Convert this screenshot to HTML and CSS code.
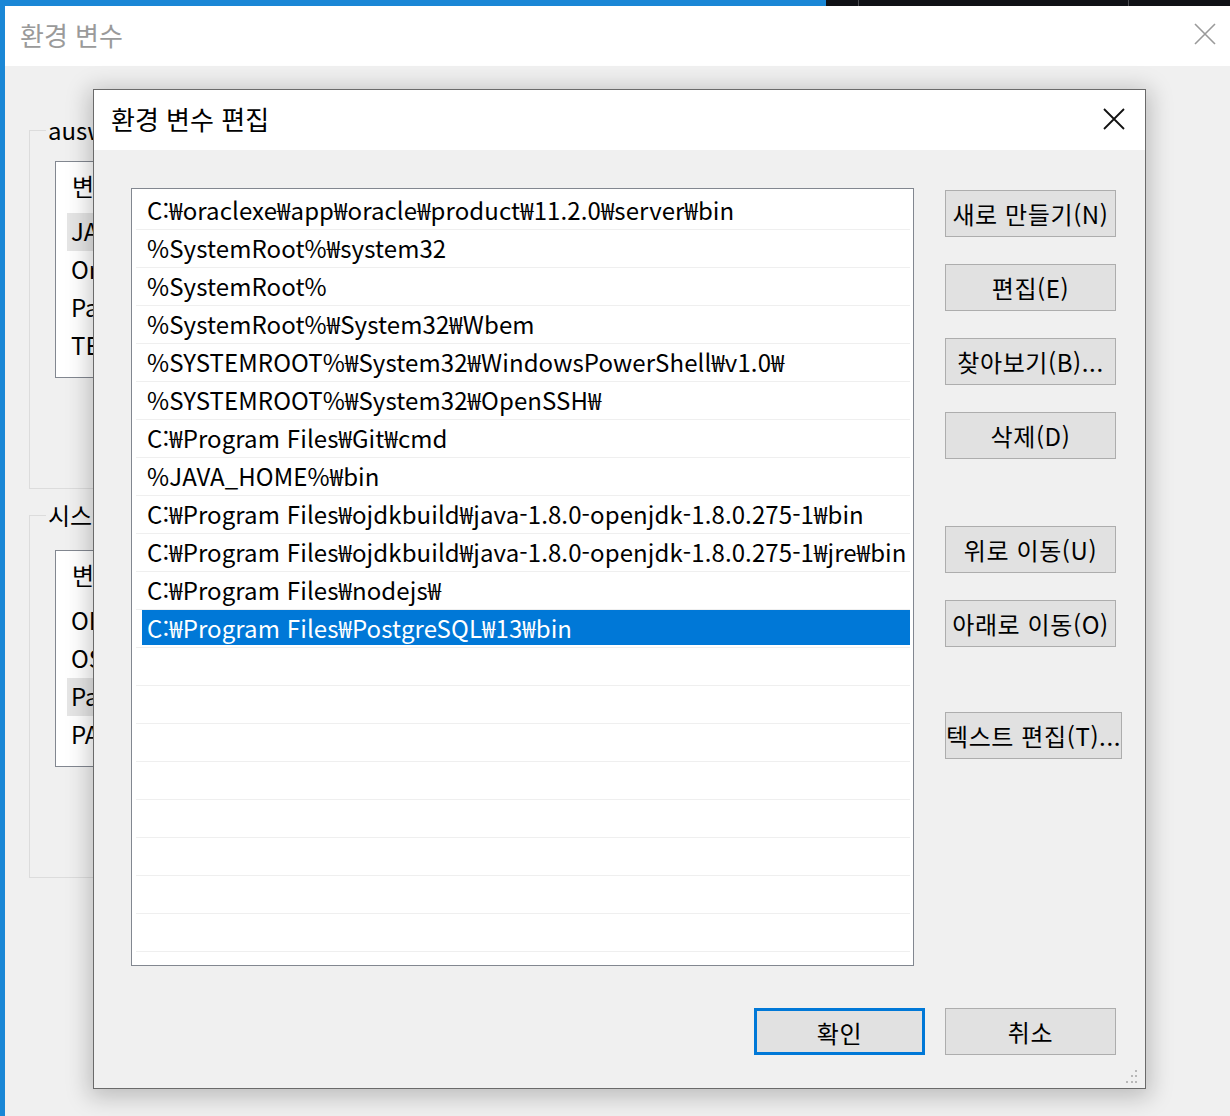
FILE: index.html
```html
<!DOCTYPE html>
<html lang="ko">
<head>
<meta charset="utf-8">
<title>환경 변수 편집</title>
<link rel="stylesheet" href="styles.css">
</head>
<body>
<div class="screen">
  <div class="topstrip">
    <div class="strip-blue"></div>
    <div class="strip-dark"><span class="seg seg1"></span><span class="seg seg2"></span></div>
  </div>
  <div class="outer">
    <div class="outer-title">
      <span class="outer-title-text">환경 변수</span>
      <svg class="outer-close" width="22" height="22" viewBox="0 0 22 22"><path d="M1 1L21 21M21 1L1 21" stroke="#9a9a9a" stroke-width="1.6" fill="none"/></svg>
    </div>
    <div class="outer-body">
      <fieldset class="group">
        <legend>ausw</legend>
        <div class="vlist">
          <div class="vhead">변수</div>
          <div class="vrow sel">JAVA_HOME</div>
          <div class="vrow">OneDrive</div>
          <div class="vrow">Path</div>
          <div class="vrow">TEMP</div>
        </div>
      </fieldset>
      <fieldset class="group group2">
        <legend>시스템 변수(S)</legend>
        <div class="vlist">
          <div class="vhead">변수</div>
          <div class="vrow">OPENSSL_CONF</div>
          <div class="vrow">OS</div>
          <div class="vrow sel">Path</div>
          <div class="vrow">PATHEXT</div>
        </div>
      </fieldset>
    </div>
  </div>

  <div class="dialog">
    <div class="dlg-title">
      <span class="dlg-title-text">환경 변수 편집</span>
      <svg class="dlg-close" width="22" height="22" viewBox="0 0 22 22"><path d="M1 1L21 21M21 1L1 21" stroke="#111" stroke-width="1.8" fill="none"/></svg>
    </div>
    <div class="dlg-body">
      <div class="dlg-main">
        <div class="plist">
          <div class="prow"><span class="pcell">C:₩oraclexe₩app₩oracle₩product₩11.2.0₩server₩bin</span></div>
          <div class="prow"><span class="pcell">%SystemRoot%₩system32</span></div>
          <div class="prow"><span class="pcell">%SystemRoot%</span></div>
          <div class="prow"><span class="pcell">%SystemRoot%₩System32₩Wbem</span></div>
          <div class="prow"><span class="pcell">%SYSTEMROOT%₩System32₩WindowsPowerShell₩v1.0₩</span></div>
          <div class="prow"><span class="pcell">%SYSTEMROOT%₩System32₩OpenSSH₩</span></div>
          <div class="prow"><span class="pcell">C:₩Program Files₩Git₩cmd</span></div>
          <div class="prow"><span class="pcell">%JAVA_HOME%₩bin</span></div>
          <div class="prow"><span class="pcell">C:₩Program Files₩ojdkbuild₩java-1.8.0-openjdk-1.8.0.275-1₩bin</span></div>
          <div class="prow"><span class="pcell">C:₩Program Files₩ojdkbuild₩java-1.8.0-openjdk-1.8.0.275-1₩jre₩bin</span></div>
          <div class="prow"><span class="pcell">C:₩Program Files₩nodejs₩</span></div>
          <div class="prow"><span class="pcell selected">C:₩Program Files₩PostgreSQL₩13₩bin</span></div>
          <div class="prow"><span class="pcell"></span></div>
          <div class="prow"><span class="pcell"></span></div>
          <div class="prow"><span class="pcell"></span></div>
          <div class="prow"><span class="pcell"></span></div>
          <div class="prow"><span class="pcell"></span></div>
          <div class="prow"><span class="pcell"></span></div>
          <div class="prow"><span class="pcell"></span></div>
          <div class="prow"><span class="pcell"></span></div>
        </div>
        <div class="side">
          <button class="btn">새로 만들기(N)</button>
          <button class="btn">편집(E)</button>
          <button class="btn">찾아보기(B)...</button>
          <button class="btn">삭제(D)</button>
          <button class="btn gap-big">위로 이동(U)</button>
          <button class="btn">아래로 이동(O)</button>
          <button class="btn wide gap-big2">텍스트 편집(T)...</button>
        </div>
      </div>
      <div class="dlg-foot">
        <button class="btn default">확인</button>
        <button class="btn">취소</button>
      </div>
    </div>
    <svg class="grip" width="16" height="16" viewBox="0 0 16 16">
      <rect x="12" y="1" width="2" height="2" fill="#b8b8b8"/>
      <rect x="8" y="6" width="2" height="2" fill="#b8b8b8"/>
      <rect x="12" y="6" width="2" height="2" fill="#b8b8b8"/>
      <rect x="3" y="12" width="2" height="2" fill="#b8b8b8"/>
      <rect x="8" y="12" width="2" height="2" fill="#b8b8b8"/>
      <rect x="12" y="12" width="2" height="2" fill="#b8b8b8"/>
    </svg>
  </div>
</div>
</body>
</html>
```

FILE: styles.css
```css
* { box-sizing: border-box; }
html, body { margin: 0; padding: 0; }
body {
  font-family: "Noto Sans CJK KR", "Noto Sans", sans-serif;
  font-size: 24px;
  color: #000;
  background: #f0f0f0;
}
.screen {
  position: relative;
  width: 1230px;
  height: 1116px;
  overflow: hidden;
  display: flex;
  flex-direction: column;
  background: #f0f0f0;
}
.topstrip { display: flex; height: 6px; flex: none; }
.strip-blue { width: 826px; background: #1a87d6; }
.strip-dark { flex: 1; background: #101116; display: flex; }
.seg { display: block; height: 100%; border-right: 1px solid #4a4b50; }
.seg1 { width: 33px; }
.seg2 { width: 270px; }

.outer {
  flex: 1;
  display: flex;
  flex-direction: column;
  border-left: 5px solid #1a87d6;
}
.outer-title {
  height: 60px;
  background: #fff;
  display: flex;
  align-items: center;
  justify-content: space-between;
  padding: 0 14px 0 15px;
  flex: none;
}
.outer-title-text { color: #9a9a9a; font-size: 26px; margin-top: -3px; }
.outer-close { margin-top: -4px; }
.outer-body {
  flex: 1;
  background: #f0f0f0;
  padding: 51px 120px 0 24px;
}
.group {
  margin: 0;
  border: 1px solid #dcdcdc;
  padding: 18px 20px 110px 25px;
  min-width: 0;
}
.group2 { margin-top: 13px; padding-top: 22px; }
.group legend {
  margin-left: -9px;
  padding: 0 2px;
  line-height: 26px;
  font-size: 24px;
  white-space: nowrap;
}
.vlist {
  background: #fff;
  border: 1px solid #828790;
  height: 217px;
  padding: 0 0 0 11px;
}
.vhead {
  height: 50px;
  line-height: 48px;
  padding-left: 5px;
  margin-bottom: 1px;
}
.vrow {
  height: 38px;
  line-height: 36px;
  padding-left: 4px;
}
.vrow.sel { background: #e5e5e5; }

.dialog {
  position: absolute;
  left: 93px;
  top: 89px;
  width: 1053px;
  height: 1000px;
  border: 1px solid #6a6a6a;
  background: #f0f0f0;
  box-shadow: 0 4px 22px 4px rgba(0,0,0,0.22);
  display: flex;
  flex-direction: column;
}
.dlg-title {
  height: 60px;
  background: #fff;
  display: flex;
  align-items: center;
  justify-content: space-between;
  padding: 0 20px 0 17px;
  flex: none;
}
.dlg-title-text { font-size: 26px; margin-top: -3px; }
.dlg-close { margin-top: -3px; }
.dlg-body {
  flex: 1;
  padding: 38px 29px 0 37px;
  display: flex;
  flex-direction: column;
}
.dlg-main { display: flex; gap: 31px; align-items: flex-start; }
.plist {
  flex: none;
  width: 783px;
  height: 778px;
  background: #fff;
  border: 1px solid #828790;
  padding: 3px 3px 0 4px;
  overflow: hidden;
}
.prow {
  height: 38px;
  border-bottom: 1px solid #efefef;
  padding-left: 6px;
}
.pcell {
  display: block;
  height: 35px;
  line-height: 35px;
  padding-left: 5px;
  white-space: nowrap;
  letter-spacing: 0.1px;
}
.pcell.selected { background: #0078d7; color: #fff; }

.side {
  flex: none;
  display: flex;
  flex-direction: column;
  gap: 27px;
  padding-top: 2px;
}
.btn {
  font-family: "Noto Sans CJK KR", "Noto Sans", sans-serif;
  font-size: 24px;
  letter-spacing: 0.6px;
  color: #000;
  width: 171px;
  height: 47px;
  background: #e1e1e1;
  border: 1px solid #adadad;
  padding: 0;
  margin: 0;
  white-space: nowrap;
  text-align: center;
  line-height: 43px;
}
.btn.wide { width: 177px; }
.gap-big { margin-top: 40px; }
.gap-big2 { margin-top: 38px; }
.btn.default { border: 3px solid #0078d7; }
.dlg-foot {
  display: flex;
  justify-content: flex-end;
  gap: 20px;
  margin-top: 42px;
}
.grip {
  position: absolute;
  right: 6px;
  bottom: 3px;
}
```
